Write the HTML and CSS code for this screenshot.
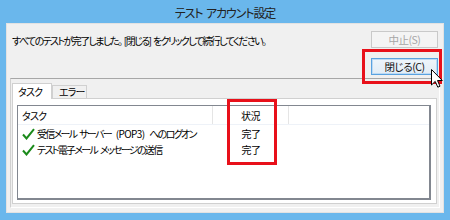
FILE: index.html
```html
<!DOCTYPE html>
<html lang="ja">
<head>
<meta charset="utf-8">
<title>テスト アカウント設定</title>
<link rel="stylesheet" href="styles.css">
</head>
<body>
<div class="window">
  <div class="titlebar">テスト アカウント設定</div>
  <div class="client">
    <div class="top">
      <div class="message">すべてのテストが完了しました。 [閉じる] をクリックして続行してください。</div>
      <div class="buttons">
        <button class="btn" disabled>中止(S)</button>
        <div class="btn-wrap">
          <button class="btn default">閉じる(C)</button>
          <span class="highlight close-hl"></span>
          <svg class="cursor" width="12" height="19" viewBox="0 0 12 19"><path d="M0.5 0.5 L0.5 16 L4.2 12.4 L6.8 18.2 L9 17.2 L6.5 11.5 L11.3 11.5 Z" fill="#fff" stroke="#000" stroke-width="1" stroke-linejoin="round"/></svg>
        </div>
      </div>
    </div>
    <div class="frame">
      <div class="tabs">
        <div class="tab active">タスク</div>
        <div class="tab">エラー</div>
      </div>
      <div class="panel">
        <div class="list">
          <div class="row header">
            <div class="cell c1">タスク</div>
            <div class="cell c2 status-col">状況<span class="highlight status-hl"></span></div>
            <div class="cell c3"></div>
          </div>
          <div class="row">
            <div class="cell c1"><svg class="check" width="13" height="12" viewBox="0 0 13 12"><path d="M1 6.5 L4.5 10.5 L12 1.2" fill="none" stroke="#1b8a1b" stroke-width="2"/></svg>受信メール サーバー <span class="latin">(POP3)</span> へのログオン</div>
            <div class="cell c2">完了</div>
          </div>
          <div class="row">
            <div class="cell c1"><svg class="check" width="13" height="12" viewBox="0 0 13 12"><path d="M1 6.5 L4.5 10.5 L12 1.2" fill="none" stroke="#1b8a1b" stroke-width="2"/></svg>テスト電子メール メッセージの送信</div>
            <div class="cell c2">完了</div>
          </div>
        </div>
      </div>
    </div>
  </div>
</div>
</body>
</html>
```
FILE: styles.css
```css
* { box-sizing: border-box; }
html, body { margin: 0; padding: 0; }
body {
  width: 450px;
  height: 220px;
  overflow: hidden;
  background: #6ab7ec;
  font-family: "Noto Sans CJK JP", "Noto Sans", sans-serif;
  font-feature-settings: "palt";
  color: #000;
}
.window {
  width: 450px;
  height: 220px;
  display: flex;
  flex-direction: column;
}
.titlebar {
  height: 23px;
  line-height: 23px;
  text-align: center;
  font-size: 12px;
  letter-spacing: -1.1px;
  word-spacing: 2px;
  color: #222;
  padding-top: 1px;
}
.client {
  margin: 0 6px;
  height: 190px;
  background: #f0f0f0;
  border: 1px solid #e2e2e2;
  display: flex;
  flex-direction: column;
}
.top {
  display: flex;
  justify-content: space-between;
  padding: 7px 5px 0 5px;
  height: 54px;
}
.message {
  font-size: 10px;
  letter-spacing: -1.6px;
  word-spacing: 2px;
  line-height: 18px;
  padding-top: 1px;
  white-space: nowrap;
}
.buttons {
  display: flex;
  flex-direction: column;
  gap: 10px;
  width: 67px;
}
.btn-wrap { position: relative; }
.btn {
  display: block;
  width: 67px;
  height: 17px;
  padding: 0;
  font-family: inherit;
  font-feature-settings: "palt";
  font-size: 10.5px;
  letter-spacing: -0.5px;
  line-height: 15px;
  border: 1px solid #acacac;
  background: linear-gradient(#f2f2f2, #e3e3e3);
  color: #000;
}
.btn:disabled {
  border-color: #c9c9c9;
  background: #f4f4f4;
  color: #a6a6a6;
}
.btn.default {
  border-color: #5aa2e0;
  background: linear-gradient(#eef5fb, #e2ecf5);
  box-shadow: inset 0 0 0 1px #bcdaf4;
  color: #111;
}
.highlight {
  position: absolute;
  border: 3px solid #e8101a;
  pointer-events: none;
}
.close-hl { top: -9px; bottom: -9px; left: -9px; right: -4px; }
.cursor { position: absolute; left: 60px; top: 11px; }
.frame {
  margin: 0 3px 0 3px;
  height: 130px;
  border-top: 1px solid #a7a7a7;
  border-left: 1px solid #d0d0d0;
  border-right: 1px solid #ffffff;
  border-bottom: 1px solid #ffffff;
  padding: 4px 2px 3px 1px;
  display: flex;
  flex-direction: column;
}
.tabs {
  display: flex;
  align-items: flex-end;
  height: 15px;
  position: relative;
  z-index: 1;
}
.tab {
  font-size: 10px;
  letter-spacing: -0.8px;
  white-space: nowrap;
  border: 1px solid #d0d0d0;
  border-bottom: none;
  background: #f0f0f0;
  height: 13px;
  line-height: 12px;
  padding: 0 0 0 6px;
  width: 35px;
}
.tab.active {
  background: #fff;
  height: 16px;
  width: 40px;
  line-height: 15px;
  padding-left: 5px;
  margin-bottom: -1px;
}
.panel {
  flex: 1;
  background: #fff;
  border: 1px solid #d0d0d0;
  padding: 6px 5px 3px 4px;
  display: flex;
}
.list {
  flex: 1;
  border: 1px solid #828790;
  border-right-width: 2px;
  border-bottom-width: 2px;
  background: #fff;
  display: flex;
  flex-direction: column;
}
.row {
  display: flex;
  height: 16px;
  font-size: 10px;
  letter-spacing: -1.7px;
  word-spacing: 2.2px;
  line-height: 16px;
  white-space: nowrap;
}
.latin { letter-spacing: -0.6px; margin: 0 2px; }
.row.header {
  height: 19px;
  line-height: 19px;
  border-bottom: 1px solid #eef2f8;
  margin-bottom: 1px;
}
.cell { position: relative; }
.c1 { width: 195px; padding-left: 4px; display: flex; align-items: center; white-space: pre; }
.c2 { width: 76px; text-align: center; letter-spacing: -0.6px; }
.c3 { flex: 1; }
.header .c1, .header .c2 { border-right: 1px solid #e5e5e5; }
.header .c1 { letter-spacing: -0.8px; }
.check { margin-right: 2px; flex: none; }
.status-hl { top: -7px; left: 14px; width: 50px; height: 66px; }
```
